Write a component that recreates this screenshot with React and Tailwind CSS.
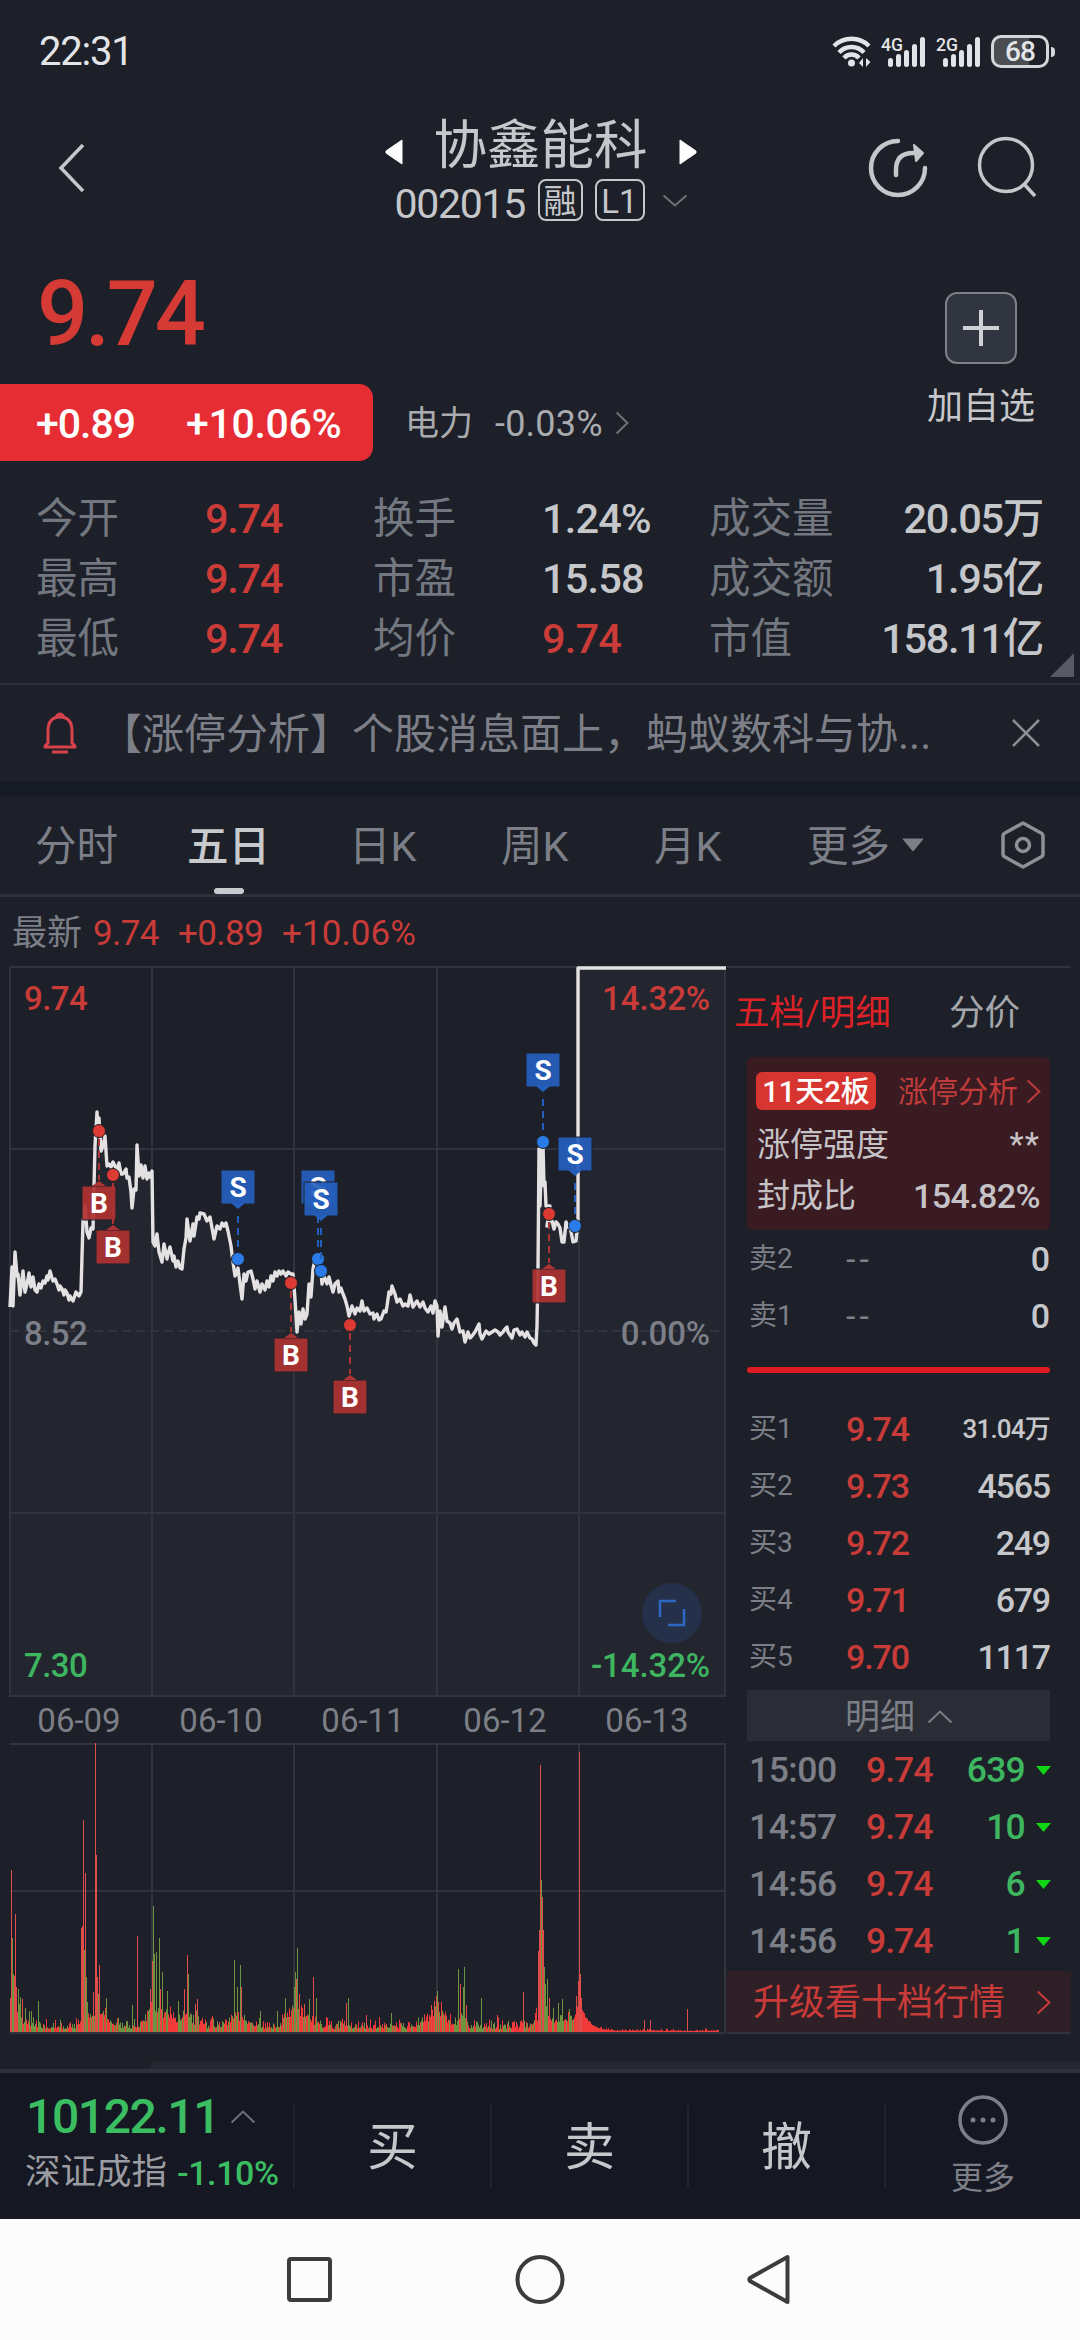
import { Fragment } from 'react';
import clsx from 'clsx';

const STATS = [
  ['今开', '9.74', true, '换手', '1.24%', false, '成交量', '20.05万'],
  ['最高', '9.74', true, '市盈', '15.58', false, '成交额', '1.95亿'],
  ['最低', '9.74', true, '均价', '9.74', true, '市值', '158.11亿'],
];

const BIDS = [
  ['买1', '9.74', '31.04万'],
  ['买2', '9.73', '4565'],
  ['买3', '9.72', '249'],
  ['买4', '9.71', '679'],
  ['买5', '9.70', '1117'],
];

const TICKS = [
  ['15:00', '9.74', '639'],
  ['14:57', '9.74', '10'],
  ['14:56', '9.74', '6'],
  ['14:56', '9.74', '1'],
];

const DATES = ['06-09', '06-10', '06-11', '06-12', '06-13'];
const GRID_X = [152, 294, 437, 579];

// price line, chart pixels
const PRICE =
  '10,341 12,301 13,340 15,286 17,310 18,308 20,329 23,305 25,326 27,318 29,307 31,321 33,311 35,324 37,326 39,318 41,322 43,315 45,317 47,310 48,314 50,305 52,312 53,315 55,313 57,318 59,324 60,320 62,323 64,329 65,324 67,327 69,334 70,330 73,335 76,326 79,330 81,326 82,290 83,256 85,240 87,266 89,272 91,262 93,263 94,220 95,180 97,146 98,166 99,152 101,185 103,180 105,170 107,200 109,198 111,201 113,196 115,200 117,204 119,197 121,208 123,208 126,203 127,212 129,211 131,226 132,242 134,223 136,224 137,179 139,210 141,199 143,212 145,200 147,213 149,207 150,211 152,205 153,276 155,280 157,268 159,286 162,296 164,278 167,293 168,288 170,281 173,295 174,290 176,301 178,295 180,302 182,303 184,283 186,272 187,253 190,275 193,258 194,270 197,251 199,253 200,247 204,248 207,255 210,251 212,262 214,273 217,260 220,263 222,257 224,260 226,257 228,265 231,280 233,296 235,310 238,302 240,318 242,333 244,308 246,315 248,306 251,305 253,313 255,323 257,315 260,326 262,318 265,324 267,315 269,321 271,310 273,315 275,306 277,310 279,305 281,308 283,305 286,310 288,306 291,308 293,308 295,333 297,366 299,346 301,358 303,343 305,353 307,348 309,318 311,331 313,303 315,293 318,298 321,306 322,318 324,310 327,318 329,311 331,319 333,326 335,318 338,315 339,326 341,322 343,328 345,333 347,340 349,350 352,340 355,348 357,342 360,345 362,335 364,345 367,342 370,348 373,347 374,353 377,348 379,354 381,353 384,345 386,346 387,340 389,326 391,328 392,320 395,328 397,336 400,333 403,340 405,338 408,340 410,329 413,341 417,335 420,341 423,336 425,342 428,346 431,340 433,347 435,335 437,340 438,370 440,345 442,361 445,341 447,355 450,357 452,363 454,357 457,353 460,366 463,365 465,376 468,366 470,372 472,370 475,366 479,358 480,368 482,373 486,365 489,368 492,366 495,364 498,366 500,369 503,366 505,363 507,361 508,366 512,372 514,364 517,363 520,369 522,366 525,371 527,366 530,372 532,373 534,377 536,379 537,360 538,303 539,183 540,240 542,178 543,180 544,220 545,216 546,240 550,240 547,260 550,253 552,255 554,263 556,256 558,258 560,262 562,276 564,276 566,256 568,261 570,260 573,276 576,275 578,253 578,2 726,2';

const TRADES = [
  { side: 'S', x: 318, y: 293 },
  { side: 'S', x: 321, y: 305 },
  { side: 'B', x: 99, y: 165 },
  { side: 'B', x: 113, y: 209 },
  { side: 'S', x: 238, y: 293 },
  { side: 'B', x: 291, y: 317 },
  { side: 'B', x: 350, y: 359 },
  { side: 'S', x: 543, y: 176 },
  { side: 'S', x: 575, y: 260 },
  { side: 'B', x: 549, y: 248 },
];

// [x, height, up]
const SPIKES = [
  [10, 34, 1], [11, 162, 1], [12, 94, 0], [13, 58, 0], [14, 56, 1], [15, 118, 1], [16, 45, 1], [18, 43, 0], [20, 35, 0], [22, 33, 1],
  [25, 24, 0], [31, 21, 0], [38, 31, 0], [81, 104, 1], [82, 106, 1], [83, 212, 1], [84, 82, 0], [85, 159, 1], [86, 55, 0], [87, 30, 0],
  [93, 40, 1], [95, 289, 1], [96, 177, 1], [97, 55, 1], [98, 38, 0], [99, 67, 1], [106, 34, 0], [132, 27, 0], [137, 96, 1],
  [150, 43, 1], [152, 71, 1], [153, 126, 0], [154, 78, 0], [156, 80, 0], [159, 94, 0], [160, 43, 1], [162, 60, 0], [167, 41, 0],
  [178, 31, 0], [184, 43, 1], [187, 77, 1], [188, 58, 0], [195, 28, 1], [197, 33, 1], [234, 72, 0], [237, 45, 0], [240, 67, 0], [241, 45, 1],
  [260, 21, 0], [277, 21, 0], [285, 34, 0], [294, 45, 0], [295, 60, 0], [296, 53, 1], [297, 84, 0], [299, 38, 1], [304, 28, 1], [309, 33, 0],
  [313, 55, 1], [316, 34, 0], [346, 29, 1], [348, 34, 0], [366, 17, 1], [391, 19, 0], [431, 27, 1], [434, 31, 1], [436, 36, 1], [437, 41, 0],
  [438, 30, 1], [458, 63, 0], [460, 48, 1], [463, 45, 0], [464, 65, 0], [466, 27, 1], [481, 34, 0], [497, 17, 1], [523, 40, 1],
  [538, 81, 1], [539, 102, 1], [540, 267, 1], [541, 152, 0], [542, 135, 1], [543, 102, 1], [544, 65, 0], [545, 48, 0], [547, 53, 0],
  [549, 34, 1], [553, 24, 0], [558, 29, 0], [562, 33, 0], [569, 23, 0], [576, 36, 1], [578, 51, 1], [579, 280, 1], [580, 58, 1], [581, 34, 1],
  [644, 12, 1], [650, 12, 1], [687, 23, 1],
];

// centres where the background volume swells: [x, amount, spread]
const SWELLS = [
  [12, 34, 8], [26, 7, 12], [83, 20, 4], [98, 22, 12], [154, 30, 9], [168, 12, 14], [187, 22, 6], [198, 9, 6], [238, 15, 14],
  [291, 16, 9], [304, 18, 12], [436, 22, 13], [462, 18, 5], [543, 36, 8], [566, 12, 12], [579, 24, 4],
];

const BARS = (() => {
  let seed = 17;
  const rand = () => {
    seed = (seed * 16807) % 2147483647;
    return seed / 2147483647;
  };
  const bars = [];
  for (let x = 10; x < 719; x += 1) {
    const swell = SWELLS.reduce((sum, [c, a, s]) => sum + a * Math.exp(-(((x - c) / s) ** 2)), 0);
    const last = x > 580;
    const h = last ? 1 + rand() * rand() * 3 + 26 * Math.exp(-(x - 580) / 8) : 3 + rand() * rand() * 14 + swell * (0.35 + rand() * 0.5);
    bars.push([x, h, last || rand() > 0.42]);
  }
  return bars;
})();

function Chevron({ dir, w, h, stroke = 2, className }) {
  const d = {
    right: 'M1 1 L19 20 L1 39',
    up: 'M1 19 L20 1 L39 19',
    down: 'M1 1 L20 19 L39 1',
  }[dir];
  return (
    <svg width={w} height={h} viewBox={dir === 'right' ? '0 0 20 40' : '0 0 40 20'} preserveAspectRatio="none" overflow="visible" className={clsx('shrink-0', className)}>
      <path d={d} fill="none" stroke="currentColor" strokeWidth={stroke} vectorEffect="non-scaling-stroke" />
    </svg>
  );
}

function Signal({ label }) {
  return (
    <svg width="46" height="32" viewBox="0 0 46 32" overflow="visible" fill="#e3e4e7">
      <text x="-1" y="15" fontSize="19" fontWeight="500" textLength="22" lengthAdjust="spacingAndGlyphs">{label}</text>
      <rect x="6" y="22" width="5" height="9" rx="2.5" />
      <rect x="14" y="18" width="5" height="13" rx="2.5" />
      <rect x="22" y="14" width="5" height="17" rx="2.5" />
      <rect x="30" y="8" width="5" height="23" rx="2.5" />
      <rect x="38" y="1" width="5" height="30" rx="2.5" />
    </svg>
  );
}

function StatusBar() {
  return (
    <div className="flex h-[102px] shrink-0 items-center pl-[39px] pr-[25px] pt-px text-[#e3e4e7]">
      <span className="text-[40px] leading-none tracking-[-1.2px]">22:31</span>
      <div className="ml-auto flex items-center">
        <svg width="40" height="32" viewBox="0 0 40 32" fill="none" stroke="#e3e4e7" strokeWidth="4.500" className="mr-[10px]">
          <path d="M2 10 A25 25 0 0 1 37 10" />
          <path d="M7 16.500 A17 17 0 0 1 32 16.500" />
          <path d="M12 22 A10 10 0 0 1 27 22" />
          <circle cx="19.500" cy="27" r="3.500" fill="#e3e4e7" stroke="none" />
          <path d="M31 22 V31 L27 27 Z M34 31 V22 L38.500 26 Z" fill="#e3e4e7" stroke="none" />
        </svg>
        <Signal label="4G" />
        <div className="w-[9px]" />
        <Signal label="2G" />
        <div className="ml-[8px] flex h-[33px] w-[58px] items-center justify-center rounded-[10px] border-[3px] border-[#d5d6d9] bg-linear-to-r from-[#4b4d53] from-68% to-transparent to-68% text-[28px] font-medium leading-none tracking-[-1px]">
          68
        </div>
        <div className="ml-[2px] h-[10px] w-[4px] rounded-r bg-[#d5d6d9]" />
      </div>
    </div>
  );
}

function Header() {
  return (
    <div className="flex h-[158px] shrink-0 justify-between pl-[58px] pr-[43px] text-[#c6c7cb]">
      <svg width="142" height="50" viewBox="0 0 142 50" className="mt-[41px]">
        <path d="M25 2 L3 25 L25 48" fill="none" stroke="currentColor" strokeWidth="3.500" />
      </svg>
      <div className="flex w-[320px] translate-x-[8px] flex-col items-center pt-3">
        <div className="flex w-[312px] items-center justify-between">
          <svg width="18" height="26" viewBox="0 0 18 26" className="mt-[14px]"><path d="M17 1 V25 L1 14 V12 Z" fill="#fff" stroke="#fff" strokeLinejoin="round" /></svg>
          <span className="mt-[2px] text-[53.500px] leading-[60px]">协鑫能科</span>
          <svg width="18" height="26" viewBox="0 0 18 26" className="mt-[14px]"><path d="M1 1 V25 L17 14 V12 Z" fill="#fff" stroke="#fff" strokeLinejoin="round" /></svg>
        </div>
        <div className="mt-[3px] flex h-[42px] items-center">
          <span className="mt-[7px] w-[143px] text-[41px] leading-[42px] tracking-[-1.3px]">002015</span>
          <span className="flex h-[42px] w-[45px] items-center justify-center rounded-[8px] border-2 border-current pt-[3px] text-[33px] leading-none">融</span>
          <span className="ml-3 flex h-[42px] w-[50px] items-center justify-center rounded-[8px] border-2 border-current pt-[3px] text-[33px] leading-none">L1</span>
          <Chevron dir="down" w={24} h={11} className="ml-[18px] text-[#6f7279]" />
        </div>
      </div>
      <div className="flex gap-[46px] pt-[34px]">
        <svg width="66" height="64" viewBox="0 0 66 64" fill="none" stroke="currentColor" strokeWidth="4.500" strokeLinecap="round">
          <path d="M33 5 A27 27 0 1 0 60 32" />
          <path d="M31 39 V34 Q31 17 48 17 H53" />
          <path d="M49 9 L58 17 L51 25 Z" fill="currentColor" strokeWidth="2" strokeLinejoin="round" />
        </svg>
        <svg width="60" height="64" viewBox="0 0 60 64" fill="none" stroke="currentColor" strokeWidth="3.500">
          <circle cx="29" cy="29" r="26.500" />
          <path d="M47 48 L58 60" />
        </svg>
      </div>
    </div>
  );
}

function Quote() {
  return (
    <div className="flex h-[423px] shrink-0 flex-col">
      <div className="flex h-[208px]">
        <div className="flex flex-col">
          <span className="h-[124px] pl-[37px] pt-[9px] text-[90px] font-medium leading-[92px] tracking-[-3.2px] text-[#d63a34]">9.74</span>
          <div className="flex items-center">
            <div className="flex h-[77px] w-[373px] items-center rounded-r-[14px] bg-[#e72d34] pl-9 pt-1 text-[41px] font-medium leading-none text-white">
              <span className="w-[150px] tracking-[-1px]">+0.89</span>
              <span className="tracking-[-0.300px]">+10.06%</span>
            </div>
            <span className="ml-[32px] w-[90px] pt-[2px] text-[34px] text-[#a9abaf]">电力</span>
            <span className="w-[121px] pt-[2px] text-[36px] tracking-[0.2px] text-[#a9abaf]">-0.03%</span>
            <Chevron dir="right" w={12} h={22} className="text-[#6f7279]" />
          </div>
        </div>
        <div className="ml-auto mr-[44px] flex w-[110px] flex-col items-center pt-8">
          <div className="flex size-[72px] items-center justify-center rounded-xl border-2 border-[#7d8087] bg-[#31353f]">
            <svg width="36" height="36" viewBox="0 0 36 36"><path d="M18 0 V36 M0 18 H36" stroke="#d0d1d4" strokeWidth="4" /></svg>
          </div>
          <span className="mt-[21px] whitespace-nowrap text-[36px] leading-[44px] text-[#c6c7cb]">加自选</span>
        </div>
      </div>
      <div className="mt-[21px] grid grid-cols-[169px_168px_169px_167px_1fr_auto] pl-9 pr-[37px] text-[41.500px] leading-[60px]">
        {STATS.map(([a, av, aUp, b, bv, bUp, c, cv]) => (
          <Fragment key={a}>
            <span className="text-[#737780]">{a}</span>
            <span className={clsx('font-medium tracking-[-1.3px]', aUp ? 'text-[#cb3b38]' : 'text-[#c6c7cb]')}>{av}</span>
            <span className="text-[#737780]">{b}</span>
            <span className={clsx('font-medium tracking-[-0.8px]', bUp ? 'text-[#cb3b38]' : 'text-[#c6c7cb]')}>{bv}</span>
            <span className="text-[#737780]">{c}</span>
            <span className="text-right font-medium tracking-[-1.3px] text-[#c6c7cb]">{cv}</span>
          </Fragment>
        ))}
      </div>
      <svg width="24" height="24" viewBox="0 0 24 24" className="ml-auto mr-[6px] -mt-4"><path d="M24 0 V24 H0 Z" fill="#575a62" /></svg>
    </div>
  );
}

function Notice() {
  return (
    <div className="flex h-[98px] shrink-0 items-center border-t-2 border-[#2c2f38] pl-[43px] pr-10">
      <svg width="34" height="42" viewBox="0 0 34 42" fill="none" stroke="#d9424a" strokeWidth="3" className="shrink-0">
        <path d="M13 5 Q17 -1 21 5" />
        <path d="M5 31 V19 Q5 5 17 5 Q29 5 29 19 V31 L32 34 V35 H2 V34 Z" strokeLinejoin="round" />
        <path d="M9 40 H25" />
      </svg>
      <span className="ml-[23px] whitespace-nowrap pt-1 text-[42px] leading-none text-[#7c7f87]">【涨停分析】个股消息面上，蚂蚁数科与协...</span>
      <svg width="28" height="28" viewBox="0 0 28 28" className="ml-auto shrink-0"><path d="M1 1 L27 27 M27 1 L1 27" stroke="#8b8e95" strokeWidth="2.500" /></svg>
    </div>
  );
}

function Tabs() {
  return (
    <div className="flex h-[101px] shrink-0 items-center border-b-[3px] border-[#2c303b] pl-[35px] pr-[35px] text-[41.500px] leading-none text-[#7c7f87]">
      <span className="w-[152px] pt-[3px]">分时</span>
      <span className="relative flex h-full w-[162px] items-center pt-[3px] font-medium text-[#c9cacd]">
        五日
        <i className="absolute bottom-0 left-[27px] h-[6px] w-[30px] rounded-[3px] bg-[#c9cacd]" />
      </span>
      <span className="w-[152px] pt-[3px]">日K</span>
      <span className="w-[153px] pt-[3px]">周K</span>
      <span className="w-[153px] pt-[3px]">月K</span>
      <span className="pt-[3px]">更多</span>
      <svg width="22" height="14" viewBox="0 0 22 14" className="ml-[12px]"><path d="M1 1 H21 L11 13 Z" fill="#7c7f87" stroke="#7c7f87" strokeLinejoin="round" /></svg>
      <svg width="44" height="50" viewBox="0 0 44 50" fill="none" stroke="#8d9097" strokeWidth="3.500" strokeLinejoin="round" className="ml-auto">
        <path d="M22 3 L40 13 Q42 14 42 16 V34 Q42 36 40 37 L22 47 L4 37 Q2 36 2 34 V16 Q2 14 4 13 Z" />
        <circle cx="22" cy="25" r="6.500" />
      </svg>
    </div>
  );
}

function Trade({ side, x, y }) {
  const buy = side === 'B';
  const color = buy ? '#ae3332' : '#255fbd';
  const top = buy ? y + 55 : y - 89;
  const tip = buy ? `M${x - 7} ${top} L${x} ${top - 5} L${x + 7} ${top}` : `M${x - 7} ${top + 33} L${x} ${top + 39} L${x + 7} ${top + 33}`;
  return (
    <g>
      <path d={buy ? `M${x} ${y + 8} V${top - 6}` : `M${x} ${top + 46} V${y}`} stroke={color} strokeWidth="2" strokeDasharray="7 5" />
      <rect x={x - 17} y={top} width="34" height="34" rx="1" fill={color} fillOpacity="0.93" stroke="#1d2028" strokeWidth="1" />
      <path d={tip} fill={color} />
      <text x={x} y={top + 27} textAnchor="middle" fontSize="28" fontWeight="700" fill="#fff">{side}</text>
      <circle cx={x} cy={y} r="6.500" fill={buy ? '#dc3a32' : '#2a7be8'} stroke="#1d2028" strokeWidth="1" />
    </g>
  );
}

function PriceChart() {
  return (
    <svg width="727" height="731" viewBox="0 0 727 731" className="block">
      <polygon points={`${PRICE} 726,730 10,730`} fill="#23262f" />
      <g stroke="#31343f" strokeWidth="2" fill="none">
        {GRID_X.map((x) => <path key={x} d={`M${x} 0 V730`} />)}
        <path d="M10 183 H725 M10 547 H725" />
        <path d="M10 365 H725" strokeDasharray="9 5" />
        <path d="M10 1 H725 V730 H10 Z" />
      </g>
      <polyline points={PRICE} fill="none" stroke="#e4e1e3" strokeWidth="3.400" strokeLinejoin="round" />
      {TRADES.map((t) => <Trade key={`${t.x}-${t.y}`} {...t} />)}
      <g fontSize="33" fontWeight="500" letterSpacing="-0.6">
        <text x="24" y="44" fill="#c93b38">9.74</text>
        <text x="24" y="379" fill="#7c7f87">8.52</text>
        <text x="24" y="711" fill="#3eb660">7.30</text>
        <g textAnchor="end" letterSpacing="-0.1">
          <text x="710" y="44" fill="#c93b38">14.32%</text>
          <text x="710" y="379" fill="#7c7f87">0.00%</text>
          <text x="710" y="711" fill="#3eb660">-14.32%</text>
        </g>
      </g>
      <circle cx="672" cy="647" r="30" fill="#25304b" />
      <path d="M660 651 V635 H676 M668 659 H684 V643" fill="none" stroke="#2f68c4" strokeWidth="2.500" />
    </svg>
  );
}

function VolumeChart() {
  return (
    <svg width="727" height="291" viewBox="0 0 727 291" className="block">
      <g stroke="#31343f" strokeWidth="2" fill="none">
        {GRID_X.map((x) => <path key={x} d={`M${x} 0 V290`} />)}
        <path d="M10 148 H725" />
        <path d="M10 1 H725 V290 H10" />
      </g>
      {BARS.map(([x, h, up]) => <rect key={x} x={x} y={289 - h} width="1" height={h} fill={up ? '#f23a3a' : '#6f9440'} />)}
      {SPIKES.map(([x, h, up]) => <rect key={x} x={x} y={289 - h} width="1" height={h} fill={up ? '#e04c4a' : '#6f9440'} />)}
    </svg>
  );
}

function OrderBook() {
  return (
    <div className="flex w-[344px] flex-col border-y-2 border-[#31343f]">
      <div className="flex h-[89px] items-center pl-[7px] pt-[3px] text-[35.500px] leading-none">
        <span className="text-[#dc2226]">五档/明细</span>
        <span className="ml-auto mr-[51px] text-[#a5a7ab]">分价</span>
      </div>
      <div className="ml-5 mr-[21px] h-[173px] rounded-md bg-[#3a1b22] px-[10px] pt-[15px] text-[33px] text-[#c6c3c7]">
        <div className="flex h-[38px] items-center">
          <span className="-ml-px flex h-[38px] w-[120px] items-center justify-center rounded-md bg-[#d63530] pt-[2px] text-[29px] font-medium leading-none text-white">11天2板</span>
          <span className="ml-auto pt-[2px] text-[30px] leading-none text-[#bf3c3b]">涨停分析</span>
          <Chevron dir="right" w={13} h={23} className="ml-[9px] text-[#bf3c3b]" />
        </div>
        <div className="mt-[9px] flex h-[51px] items-center justify-between pt-px">
          <span>涨停强度</span>
          <span className="tracking-[1px]">**</span>
        </div>
        <div className="flex h-[51px] items-center justify-between pt-px">
          <span>封成比</span>
          <span className="text-[34px] font-medium tracking-[-0.6px]">154.82%</span>
        </div>
      </div>
      {['卖2', '卖1'].map((label) => (
        <div key={label} className="mx-[22px] flex h-[57px] items-center text-[28px] leading-none text-[#7c7f87]">
          <span className="w-[97px]">{label}</span>
          <span className="text-[34px] tracking-[4px]">--</span>
          <span className="ml-auto text-[34px] font-medium tracking-[-1px] text-[#c6c7cb]">0</span>
        </div>
      ))}
      <div className="ml-5 mr-[21px] mt-[23px] h-[6px] shrink-0 rounded-full bg-[#dc1c20]" />
      <div className="mt-[27px]">
        {BIDS.map(([label, price, qty]) => (
          <div key={label} className="ml-[22px] mr-[21px] flex h-[57px] items-center text-[28px] leading-none text-[#7c7f87]">
            <span className="w-[97px]">{label}</span>
            <span className="text-[34px] font-medium tracking-[-1.1px] text-[#c93b38]">{price}</span>
            <span className={clsx('ml-auto font-medium text-[#c6c7cb]', qty.endsWith('万') ? 'text-[26px] tracking-[-0.8px]' : 'text-[34px] tracking-[-1.2px]')}>{qty}</span>
          </div>
        ))}
      </div>
      <div className="ml-5 mr-[21px] mt-[5px] flex h-[51px] items-center justify-center bg-[#2b2d36] pt-[3px] text-[35px] leading-none text-[#7c7f87]">
        明细
        <Chevron dir="up" w={24} h={12} className="ml-[13px]" />
      </div>
      <div className="pt-px">
        {TICKS.map(([time, price, qty], i) => (
          <div key={i} className="ml-[22px] mr-[20px] flex h-[57px] items-center text-[35.500px] font-medium leading-none tracking-[-1px]">
            <span className="w-[117px] tracking-[-0.5px] text-[#7c7f87]">{time}</span>
            <span className="text-[#c93b38]">{price}</span>
            <span className="ml-auto tracking-[-0.8px] text-[#3eb660]">{qty}</span>
            <svg width="15" height="9" viewBox="0 0 15 9" className="ml-[11px]"><path d="M0 0 H15 L7.500 9 Z" fill="#10d614" /></svg>
          </div>
        ))}
      </div>
      <div className="mt-auto flex h-[61px] items-center justify-between bg-[#2f2027] pl-[26px] pr-[21px] pt-[2px] text-[36px] leading-none text-[#c93b38]">
        升级看十档行情
        <Chevron dir="right" w={13} h={23} />
      </div>
    </div>
  );
}

function BottomBar() {
  return (
    <div className="flex h-[150px] shrink-0 items-center border-t-4 border-[#2b323b] bg-[#151823] text-[#c6c7cb]">
      <div className="flex h-full w-[293px] flex-col pl-[26px] pt-[18px]">
        <div className="flex h-[52px] items-center">
          <span className="w-[205px] text-[48px] font-medium leading-none tracking-[-1.4px] text-[#3bbe62]">10122.11</span>
          <Chevron dir="up" w={24} h={12} className="text-[#6f7279]" />
        </div>
        <div className="mt-[6px] flex h-[48px] items-center whitespace-nowrap leading-none">
          <span className="-ml-px w-[152px] text-[35.500px] text-[#9b9da2]">深证成指</span>
          <span className="text-[34px] font-medium tracking-[-0.4px] text-[#3bbe62]">-1.10%</span>
        </div>
      </div>
      {['买', '卖', '撤'].map((label) => (
        <span key={label} className="flex h-[83px] w-[197px] items-center justify-center border-l-2 border-[#20242e] pt-[3px] text-[51px] leading-none">{label}</span>
      ))}
      <div className="flex h-[83px] flex-1 items-center justify-center border-l-2 border-[#20242e] text-[32px] text-[#7c7f87]">
        <div className="flex flex-col items-center gap-[10px] pt-1">
          <svg width="50" height="50" viewBox="0 0 50 50" fill="currentColor">
            <circle cx="25" cy="25" r="23" fill="none" stroke="currentColor" strokeWidth="3.500" />
            <circle cx="15" cy="25" r="2.500" />
            <circle cx="25" cy="25" r="2.500" />
            <circle cx="35" cy="25" r="2.500" />
          </svg>
          <span className="leading-[46px]">更多</span>
        </div>
      </div>
    </div>
  );
}

function NavBar() {
  return (
    <div className="flex h-[121px] shrink-0 items-center justify-center bg-[#fcfcfc]">
      <svg width="520" height="52" viewBox="0 0 520 52" fill="none" stroke="#3c3c3c" strokeWidth="4" strokeLinejoin="round">
        <rect x="9" y="5" width="41" height="41" rx="2" />
        <circle cx="260" cy="25.500" r="22.500" />
        <path d="M507.500 3 V48 L470 27 Q468.500 25.500 470 24 Z" />
      </svg>
    </div>
  );
}

export default function App() {
  return (
    <div className="flex h-[2340px] w-[1080px] flex-col overflow-hidden bg-[#1d2028] font-[Roboto,'Noto_Sans_CJK_SC',sans-serif]">
      <StatusBar />
      <Header />
      <Quote />
      <Notice />
      <div className="h-[15px] shrink-0 bg-[#171b26]" />
      <Tabs />
      <div className="flex h-[69px] shrink-0 items-center pl-3 pt-1 text-[35px] leading-none tracking-[-0.6px] text-[#c93b38]">
        <span className="w-[81px] tracking-normal text-[#7c7f87]">最新</span>
        <span className="w-[85px]">9.74</span>
        <span className="w-[104px]">+0.89</span>
        <span className="tracking-[0.1px]">+10.06%</span>
      </div>
      <div className="flex h-[1068px] shrink-0">
        <div className="w-[727px]">
          <PriceChart />
          <div className="flex h-[46px] items-center pl-[8px] text-[33px] leading-none text-[#7c7f87]">
            {DATES.map((d) => <span key={d} className="w-[142px] text-center">{d}</span>)}
          </div>
          <VolumeChart />
        </div>
        <OrderBook />
      </div>
      <div className="flex flex-1 items-end">
        <div className="ml-[150px] h-2 flex-1 rounded-tl-lg bg-[#24272f]" />
      </div>
      <BottomBar />
      <NavBar />
    </div>
  );
}
